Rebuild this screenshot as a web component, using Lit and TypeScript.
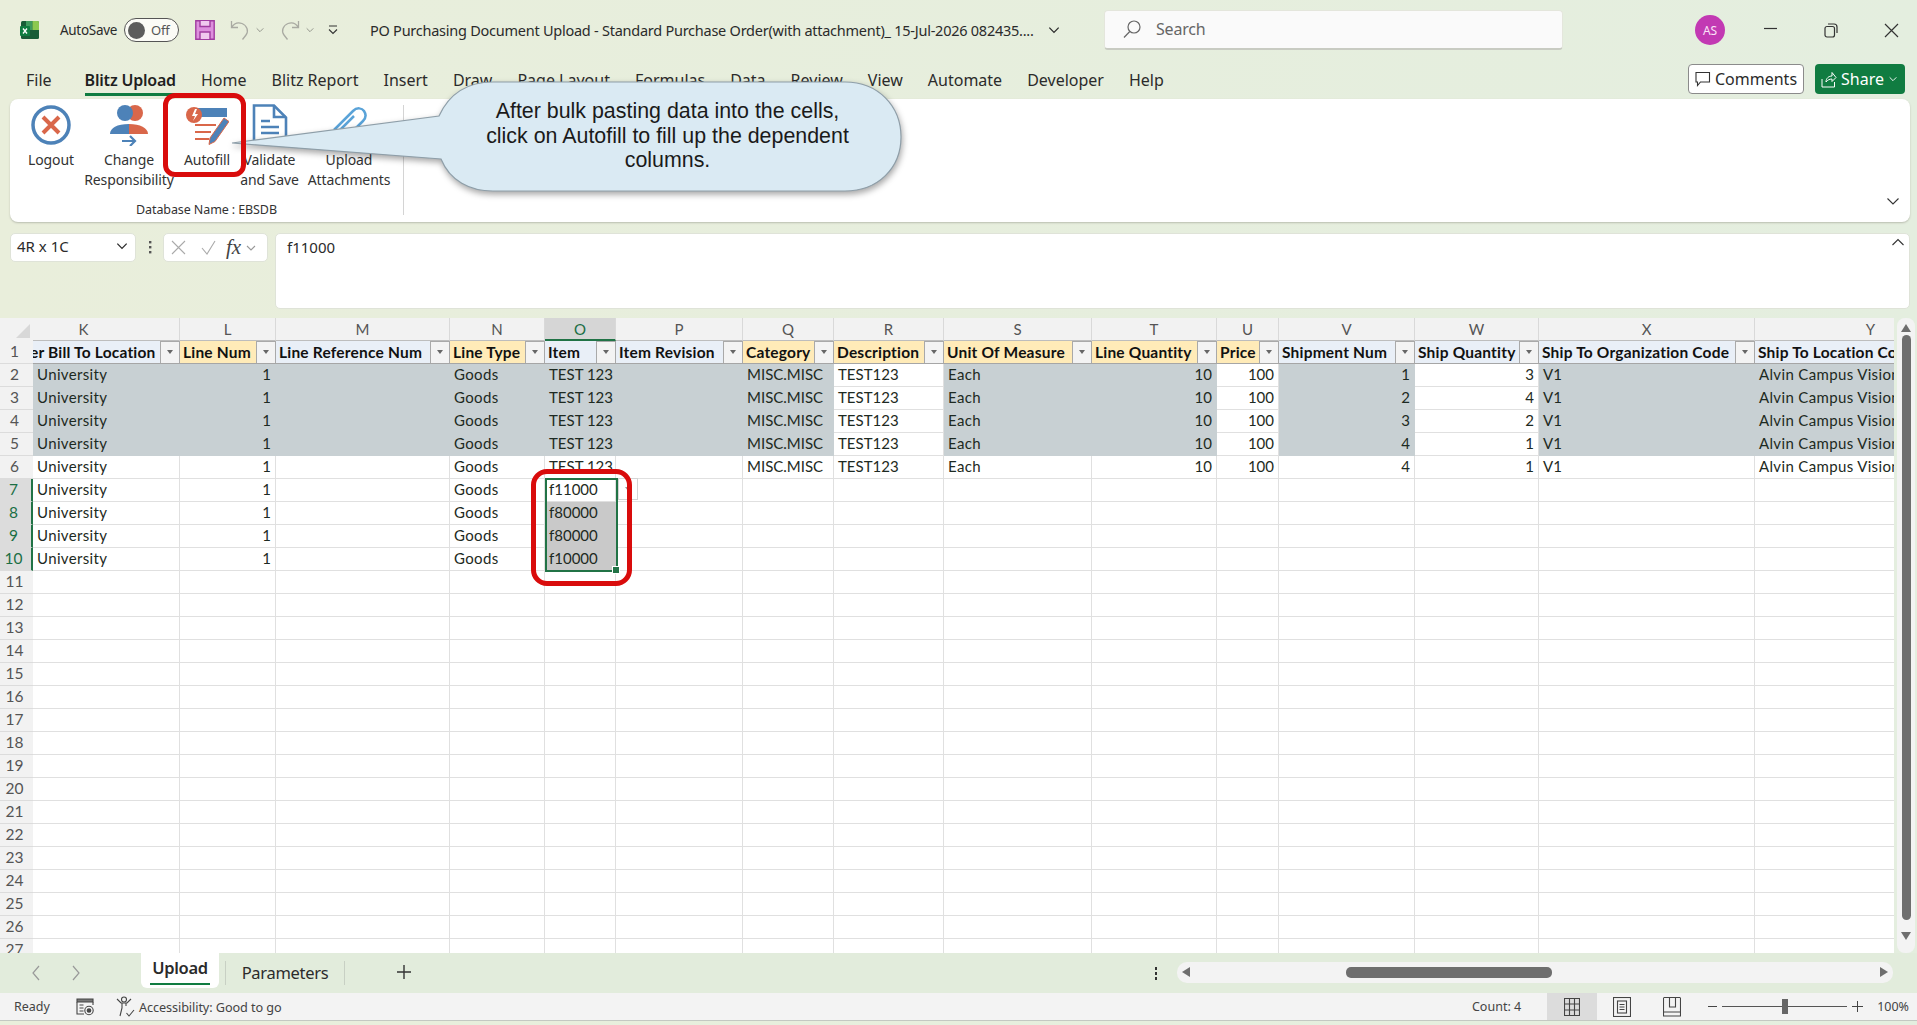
import { html, css, svg, LitElement } from 'lit';
import { customElement } from 'lit/decorators.js';

const COLS = ['K', 'L', 'M', 'N', 'O', 'P', 'Q', 'R', 'S', 'T', 'U', 'V', 'W', 'X', 'Y'];

// true = yellow "required" header, everything else is the pale blue one
const HEADERS: [string, boolean][] = [
  ['er Bill To Location', false],
  ['Line Num', true],
  ['Line Reference Num', false],
  ['Line Type', true],
  ['Item', false],
  ['Item Revision', false],
  ['Category', true],
  ['Description', true],
  ['Unit Of Measure', true],
  ['Line Quantity', true],
  ['Price', true],
  ['Shipment Num', false],
  ['Ship Quantity', false],
  ['Ship To Organization Code', false],
  ['Ship To Location Code', false],
];

const NUMERIC = new Set(['L', 'T', 'U', 'V', 'W']);
const LOWERCASE = new Set(['K', 'N', 'S', 'Y']);
const WHITE_COLS = new Set(['R', 'U', 'W']);
const SHIP_NUM = [1, 2, 3, 4, 4];
const SHIP_QTY = [3, 4, 2, 1, 1];
const ITEM_CODES = ['f11000', 'f80000', 'f80000', 'f10000'];

function cellValue(col: string, row: number): string {
  const i = row - 2;
  if (row > 10) return '';
  if (col === 'K') return 'University';
  if (col === 'L') return '1';
  if (col === 'N') return 'Goods';
  if (col === 'O') return row <= 6 ? 'TEST 123' : ITEM_CODES[row - 7];
  if (row > 6) return '';
  switch (col) {
    case 'Q': return 'MISC.MISC';
    case 'R': return 'TEST123';
    case 'S': return 'Each';
    case 'T': return '10';
    case 'U': return '100';
    case 'V': return String(SHIP_NUM[i]);
    case 'W': return String(SHIP_QTY[i]);
    case 'X': return 'V1';
    case 'Y': return 'Alvin Campus Vision';
  }
  return '';
}

const chevron = (w = 12) => html`<svg width=${w} height=${w} viewBox="0 0 12 12"><path d="M2 4l4 4 4-4" fill="none" stroke="currentColor" stroke-width="1.1"/></svg>`;

@customElement('app-root')
export class AppRoot extends LitElement {
  static styles = css`
    :host {
      display: block;
      position: relative;
      width: 1917px;
      height: 1025px;
      overflow: hidden;
      background: linear-gradient(90deg, #e9eedb, #e4eedf);
      font-family: 'Noto Sans', 'Open Sans', sans-serif;
      color: #2b2b2b;
    }
    svg { display: block; flex: none; }

    /* title bar */
    .title {
      height: 60px;
      display: flex;
      align-items: center;
      font-size: 14px;
      position: relative;
      letter-spacing: -0.2px;
    }
    .logo { margin-left: 20px; }
    .autosave { margin-left: 20px; width: 59px; font-size: 13.5px; letter-spacing: -0.3px; }
    .toggle {
      margin-left: 5px;
      width: 55px;
      height: 24px;
      box-sizing: border-box;
      border: 1px solid #555;
      border-radius: 12px;
      background: #fbfbf6;
      display: flex;
      align-items: center;
      padding-left: 3px;
      gap: 6px;
      font-size: 13px;
      color: #555;
    }
    .knob { width: 17px; height: 17px; border-radius: 50%; background: #5c5c5c; }
    .save { margin-left: 16px; }
    .undo { margin-left: 15px; color: #a9aaa2; }
    .undo-c { margin-left: 5px; color: #8d8f87; }
    .custom { margin-left: 12px; margin-right: 31px; }
    .doc { width: 666px; white-space: nowrap; font-size: 14.5px; letter-spacing: -0.25px; }
    .doc-c { margin-left: 11px; }
    .search {
      position: absolute;
      left: 1104px;
      top: 10px;
      width: 459px;
      height: 40px;
      box-sizing: border-box;
      background: #fafafa;
      border-radius: 4px;
      border: 1px solid #e4e6dc;
      border-bottom: 2px solid #c8cbc2;
      display: flex;
      align-items: center;
      padding: 0 0 2px 17px;
      gap: 14px;
      color: #666;
      font-size: 16px;
    }
    .avatar {
      position: absolute;
      left: 1695px;
      top: 15px;
      width: 30px;
      height: 30px;
      border-radius: 50%;
      background: #c239b3;
      color: #fbe3f8;
      font-size: 12px;
      display: flex;
      align-items: center;
      justify-content: center;
    }
    .win { position: absolute; top: 22px; }

    /* ribbon tabs */
    .tabs {
      height: 39px;
      display: flex;
      align-items: flex-start;
      gap: 25px;
      padding-left: 26px;
      font-size: 16px;
      position: relative;
    }
    .tabs span { padding-top: 8px; line-height: 24px; }
    .tabs .on {
      font-weight: 600;
      border-bottom: 3px solid #107c41;
      color: #1f1f1f;
      padding-top: 8px;
      margin: 0 0 0 8px;
      box-sizing: content-box;
      height: 25px;
      letter-spacing: -0.2px;
    }
    .comments {
      position: absolute;
      left: 1688px;
      top: 4px;
      width: 116px;
      height: 30px;
      box-sizing: border-box;
      border: 1px solid #8b8b8b;
      border-radius: 4px;
      background: #fff;
      display: flex;
      align-items: center;
      gap: 4px;
      padding-left: 6px;
      font-size: 16px;
    }
    .share {
      position: absolute;
      left: 1815px;
      top: 4px;
      width: 90px;
      height: 30px;
      border-radius: 4px;
      background: #107c41;
      color: #fff;
      display: flex;
      align-items: center;
      gap: 4px;
      padding-left: 6px;
      box-sizing: border-box;
      font-size: 16px;
    }

    /* ribbon */
    .ribbon {
      margin: 0 7px 0 10px;
      height: 123px;
      background: #fff;
      border-radius: 8px;
      box-shadow: 0 1px 2px #b9bdb0;
      position: relative;
      display: flex;
      font-size: 14px;
      color: #333;
    }
    .group {
      width: 393px;
      height: 110px;
      margin-top: 6px;
      border-right: 1px solid #d4d4d4;
      position: relative;
      display: flex;
      flex-direction: column;
    }
    .buttons { display: flex; height: 87px; padding-left: 9px; }
    .rb {
      display: flex;
      flex-direction: column;
      align-items: center;
      text-align: center;
      line-height: 20px;
      white-space: nowrap;
      letter-spacing: -0.1px;
    }
    .rb svg { margin: -1px 0 4px; }
    .group-name { text-align: center; font-size: 12.5px; line-height: 20px; margin-top: 10px; letter-spacing: -0.1px; }
    .collapse { position: absolute; right: 10px; bottom: 14px; color: #333; }

    /* formula bar */
    .fbar {
      height: 96px;
      box-sizing: border-box;
      padding: 11px 7px 0 10px;
      display: flex;
      align-items: flex-start;
    }
    .name {
      width: 126px;
      height: 29px;
      box-sizing: border-box;
      background: #fff;
      border: 1px solid #dfe3d8;
      border-radius: 5px;
      display: flex;
      align-items: center;
      justify-content: space-between;
      padding: 0 6px 3px;
      font-size: 15px;
    }
    .vdots { width: 27px; display: flex; justify-content: center; padding-top: 8px; }
    .fx {
      width: 105px;
      height: 29px;
      box-sizing: border-box;
      background: #fff;
      border: 1px solid #dfe3d8;
      border-radius: 5px;
      display: flex;
      align-items: center;
      padding-left: 6px;
      color: #999;
    }
    .fx .ok { margin-left: 13px; }
    .fx i {
      font: italic 21px 'Liberation Serif', serif;
      color: #444;
      margin-left: 9px;
      width: 19px;
    }
    .input {
      margin-left: 7px;
      flex: 1;
      height: 76px;
      box-sizing: border-box;
      background: #fff;
      border: 1px solid #dfe3d8;
      border-radius: 5px;
      padding: 2px 11px;
      font-size: 15px;
      line-height: 22px;
      position: relative;
    }
    .input svg { position: absolute; right: 4px; top: 2px; color: #333; }

    /* sheet */
    .book { height: 635px; display: flex; }
    .sheet {
      width: 1894px;
      height: 635px;
      overflow: hidden;
      background: #fff;
      display: grid;
      grid-template-columns: 33px 147px 96px 174px 95px 71px 127px 91px 110px 148px 125px 62px 136px 124px 216px 232px;
      grid-auto-rows: 23px;
      font-family: Lato, 'Open Sans', sans-serif;
      font-size: 15px;
      color: #1d2a22;
    }
    .corner { background: #f2f2f2; position: relative; }
    .corner::after {
      content: '';
      position: absolute;
      right: 3px;
      bottom: 3px;
      border-left: 14px solid transparent;
      border-bottom: 14px solid #d8d8d8;
    }
    .ch {
      background: #f2f2f2;
      border-right: 1px solid #d9d9d9;
      border-bottom: 1px solid #bdbdbd;
      text-align: center;
      line-height: 22px;
      color: #555;
      font-size: 15px;
      box-sizing: border-box;
    }
    .ch.k { padding-right: 45px; }
    .ch.sel { background: #d6d6d6; color: #1b6f45; border-bottom: 2px solid #217346; }
    .rh {
      background: #f2f2f2;
      border-bottom: 1px solid #dcdcdc;
      text-align: center;
      line-height: 21px;
      font-size: 15.5px;
      color: #555;
      box-sizing: border-box;
      padding-right: 4px;
    }
    .rh.sel { background: #dcdcdc; color: #1b6f45; border-right: 2px solid #217346; }
    .hd {
      box-sizing: border-box;
      display: flex;
      align-items: center;
      justify-content: space-between;
      background: #e9eff7;
      border-bottom: 1px solid #a6a6a6;
      font-size: 15.5px;
      letter-spacing: 0.2px;
      font-weight: 700;
      color: #111;
      padding-left: 3px;
      overflow: hidden;
      white-space: nowrap;
    }
    .hd.req { background: #ffebb8; }
    .hd.first { padding-left: 0; }
    .hd.first span { margin-left: -3px; }
    .hd span { overflow: hidden; }
    .flt {
      width: 20px;
      height: 23px;
      flex: none;
      box-sizing: border-box;
      background: #f3f3f3;
      border: 1px solid #a9a9a9;
      display: flex;
      align-items: center;
      justify-content: center;
    }
    .flt::after {
      content: '';
      border-left: 3.5px solid transparent;
      border-right: 3.5px solid transparent;
      border-top: 4px solid #666;
    }
    .c {
      box-sizing: border-box;
      border-right: 1px solid #e0e0e0;
      border-bottom: 1px solid #e0e0e0;
      padding: 0 4px;
      line-height: 21px;
      white-space: nowrap;
      overflow: hidden;
    }
    .c.num { text-align: right; }
    .c.wide { letter-spacing: 0.35px; }
    .c.hl { background: #c8d0d3; border-color: #c8d0d3; }
    .c.range { background: #c9c9c9; border-color: #c9c9c9; }

    .vscroll {
      flex: 1;
      margin: 0 2px 0 3px;
      background: #f3f3f3;
      border-radius: 8px;
      position: relative;
      display: flex;
      flex-direction: column;
      align-items: center;
      padding-top: 6px;
      box-sizing: border-box;
    }
    .vthumb { width: 9px; height: 585px; margin-top: 3px; background: #6e6e6e; border-radius: 5px; }
    .vscroll b { display: block; border-left: 5px solid transparent; border-right: 5px solid transparent; }
    .vscroll .up { border-bottom: 8px solid #6e6e6e; }
    .vscroll .dn { border-top: 8px solid #6e6e6e; margin-top: 12px; }

    /* sheet tabs */
    .sheets {
      height: 40px;
      background: #e2ecdc;
      display: flex;
      align-items: flex-start;
      position: relative;
      font-size: 16.5px;
    }
    .nav { width: 40px; display: flex; justify-content: center; padding-top: 12px; color: #999; }
    .nav:first-child { margin-left: 16px; }
    .tab-on {
      margin-left: 45px;
      width: 78px;
      height: 35px;
      background: #fff;
      border-radius: 0 0 6px 6px;
      box-sizing: border-box;
      text-align: center;
      font-weight: 600;
      line-height: 30px;
      position: relative;
      letter-spacing: -0.3px;
    }
    .tab-on::after {
      content: '';
      position: absolute;
      left: 9px;
      right: 9px;
      bottom: 3px;
      height: 2px;
      background: #107c41;
    }
    .tab-off {
      margin: 8px 0 0 6px;
      height: 24px;
      width: 120px;
      box-sizing: border-box;
      border-left: 1px solid #c8d0c4;
      border-right: 1px solid #c8d0c4;
      text-align: center;
      line-height: 24px;
      letter-spacing: -0.3px;
    }
    .plus { margin: 11px 0 0 51px; }
    .dots { position: absolute; left: 1154px; top: 14px; }
    .hscroll {
      position: absolute;
      left: 1177px;
      top: 9px;
      width: 716px;
      height: 21px;
      background: #f3f3f3;
      border-radius: 10px;
    }
    .hthumb { position: absolute; left: 169px; top: 5px; width: 206px; height: 11px; background: #6e6e6e; border-radius: 5px; }
    .hscroll b { position: absolute; top: 5px; border-top: 5px solid transparent; border-bottom: 5px solid transparent; }
    .hscroll .lf { left: 5px; border-right: 8px solid #6e6e6e; }
    .hscroll .rt { right: 5px; border-left: 8px solid #6e6e6e; }

    /* status bar */
    .status {
      height: 27px;
      background: #f3f3f3;
      border-bottom: 1px solid #c4c8c2;
      box-sizing: content-box;
      display: flex;
      align-items: center;
      font-size: 12.5px;
      color: #444;
      position: relative;
    }
    .ready { margin-left: 14px; width: 62px; }
    .acc { margin-left: 22px; display: flex; align-items: center; gap: 4px; font-size: 12.7px; letter-spacing: -0.1px; }
    .right { position: absolute; right: 8px; top: 0; height: 27px; display: flex; align-items: center; }
    .count { margin-right: 26px; }
    .view { width: 50px; height: 27px; display: flex; align-items: center; justify-content: center; }
    .view.on { background: #dcdcdc; }
    .zoom { display: flex; align-items: center; margin-left: 11px; }
    .track { width: 125px; height: 1px; background: #555; margin: 0 5px; position: relative; }
    .track::after { content: ''; position: absolute; left: 60px; top: -7px; width: 6px; height: 15px; background: #666; }
    .pct { margin-left: 14px; }

    /* overlays */
    .callout { position: absolute; left: 225px; top: 75px; }
    .callout-text {
      position: absolute;
      left: 438px;
      top: 99px;
      width: 459px;
      text-align: center;
      font: 21.4px/24.7px 'Liberation Sans', Arial, sans-serif;
      color: #1a1a1a;
    }
    .mark { position: absolute; box-sizing: border-box; border: 5px solid #d90c0c; }
    .mark-btn { left: 163px; top: 93px; width: 83px; height: 84px; border-radius: 12px; }
    .mark-cells { left: 531px; top: 469px; width: 101px; height: 117px; border-radius: 16px; }
    .selection { position: absolute; left: 545px; top: 478px; width: 73px; height: 94px; box-sizing: border-box; border: 2px solid #217346; }
    .handle { position: absolute; right: -4px; bottom: -4px; width: 6px; height: 6px; background: #217346; border: 1px solid #fff; }
    .dd { position: absolute; left: 618px; top: 478px; width: 20px; height: 22px; box-sizing: border-box; border: 1px solid #d4d4d4; background: #fff; display: flex; align-items: center; justify-content: center; }
    .dd::after { content: ''; border-left: 3.5px solid transparent; border-right: 3.5px solid transparent; border-top: 4px solid #999; }
  `;

  private renderSheet() {
    const rows = [];
    for (let r = 2; r <= 27; r++) {
      const inRange = r >= 7 && r <= 10;
      rows.push(html`<div class="rh ${inRange ? 'sel' : ''}">${r}</div>`);
      for (const col of COLS) {
        const gray = r <= 5 && !WHITE_COLS.has(col);
        const range = col === 'O' && r >= 8 && r <= 10;
        const cls = `c ${NUMERIC.has(col) ? 'num' : ''} ${LOWERCASE.has(col) ? 'wide' : ''} ${gray ? 'hl' : ''} ${range ? 'range' : ''}`;
        rows.push(html`<div class=${cls}>${cellValue(col, r)}</div>`);
      }
    }
    return html`
      <div class="sheet">
        <div class="corner"></div>
        ${COLS.map((c) => html`<div class="ch ${c === 'O' ? 'sel' : ''} ${c === 'K' ? 'k' : ''}">${c}</div>`)}
        <div class="rh">1</div>
        ${HEADERS.map(([t, req], i) => html`
          <div class="hd ${req ? 'req' : ''} ${i === 0 ? 'first' : ''}">
            <span>${t}</span>${i === 14 ? '' : html`<div class="flt"></div>`}
          </div>`)}
        ${rows}
      </div>`;
  }

  render() {
    return html`
      <div class="title">
        <svg class="logo" width="20" height="20" viewBox="0 0 20 20">
          <rect x="1" y="1" width="18" height="18" rx="1.5" fill="#185c37"/>
          <path d="M6 1h6.500v9H6z" fill="#3f9a5e"/>
          <path d="M12.500 1H17.500a1.500 1.500 0 0 1 1.500 1.500V10h-6.500z" fill="#8cc850"/>
          <rect x="0" y="6" width="10" height="10" rx="1" fill="#107c41"/>
          <path d="M3 8.500l4 5M7 8.500l-4 5" stroke="#fff" stroke-width="1.300"/>
        </svg>
        <span class="autosave">AutoSave</span>
        <div class="toggle"><div class="knob"></div>Off</div>
        <svg class="save" width="20" height="20" viewBox="0 0 20 20">
          <path d="M.8.8h18.400v18.400H.8z" fill="#dd8fdd" stroke="#a03ba0" stroke-width="1.400"/>
          <path d="M5 1v5.500h10V1M5 19v-7h10v7" fill="#f0c8ee" stroke="#a03ba0" stroke-width="1.400"/>
        </svg>
        <svg class="undo" width="20" height="20" viewBox="0 0 20 20" fill="none" stroke="currentColor" stroke-width="1.300">
          <path d="M1.500 1v6.500H8M1.500 7.500C4 3.500 8 2 12 3.500c5 2 7 7.500 4 11.500l-3.500 4.500"/>
        </svg>
        <span class="undo-c">${chevron(10)}</span>
        <svg class="undo" width="20" height="20" viewBox="0 0 20 20" fill="none" stroke="currentColor" stroke-width="1.300" style="transform:scaleX(-1)">
          <path d="M1.500 1v6.500H8M1.500 7.500C4 3.500 8 2 12 3.500c5 2 7 7.500 4 11.500l-3.500 4.500"/>
        </svg>
        <span class="undo-c">${chevron(10)}</span>
        <svg class="custom" width="12" height="12" viewBox="0 0 12 12" fill="none" stroke="#333" stroke-width="1.100">
          <path d="M2 2h8M2 5.500l4 4 4-4"/>
        </svg>
        <span class="doc">PO Purchasing Document Upload - Standard Purchase Order(with attachment)_ 15-Jul-2026 082435....</span>
        <span class="doc-c">${chevron(14)}</span>
        <div class="search">
          <svg width="20" height="20" viewBox="0 0 20 20" fill="none" stroke="#666" stroke-width="1.200"><circle cx="12" cy="8" r="6"/><path d="M7.800 12.500L2 18.500"/></svg>
          Search
        </div>
        <div class="avatar">AS</div>
        <svg class="win" style="left:1764px" width="14" height="14" viewBox="0 0 14 14"><path d="M0 6.500h13" stroke="#333" stroke-width="1.200"/></svg>
        <svg class="win" style="left:1824px;top:23px" width="14" height="15" viewBox="0 0 14 15" fill="none" stroke="#333" stroke-width="1.200"><rect x="1" y="3.500" width="9.500" height="10.500" rx="2"/><path d="M4 1h6a3 3 0 0 1 3 3v6"/></svg>
        <svg class="win" style="left:1884px;top:23px" width="15" height="15" viewBox="0 0 15 15"><path d="M1 1l13 13M14 1L1 14" stroke="#333" stroke-width="1.200"/></svg>
      </div>

      <div class="tabs">
        <span>File</span>
        <span class="on">Blitz Upload</span>
        <span>Home</span>
        <span>Blitz Report</span>
        <span>Insert</span>
        <span>Draw</span>
        <span>Page Layout</span>
        <span>Formulas</span>
        <span>Data</span>
        <span>Review</span>
        <span>View</span>
        <span>Automate</span>
        <span>Developer</span>
        <span>Help</span>
        <div class="comments">
          <svg width="16" height="16" viewBox="0 0 16 16" fill="none" stroke="#333" stroke-width="1.100"><path d="M1 1.500h13.500v9.500H5.500L2.500 14.500V11H1z"/></svg>
          Comments
        </div>
        <div class="share">
          <svg width="16" height="18" viewBox="0 0 16 18" fill="none" stroke="#fff" stroke-width="1"><path d="M1 9v8h12.500v-5M5 12c0-4 3-6 6-6V2.500l4 5-4 4V9c-2.500 0-4.500 1-6 3z"/></svg>
          Share
          ${chevron(10)}
        </div>
      </div>

      <div class="ribbon">
        <div class="group">
          <div class="buttons">
            <div class="rb" style="width:64px">
              ${svg`<svg width="42" height="42" viewBox="0 0 42 42">
                <circle cx="21" cy="21" r="18" fill="none" stroke="#4d82b8" stroke-width="3.500"/>
                <path d="M13 13l16 16M29 13L13 29" stroke="#d9674a" stroke-width="4"/></svg>`}
              Logout
            </div>
            <div class="rb" style="width:90px;margin-left:1px">
              ${svg`<svg width="42" height="42" viewBox="0 0 42 42">
                <circle cx="27" cy="9" r="8" fill="#d9674a"/>
                <circle cx="17" cy="9" r="8" fill="#4d82b8"/>
                <path d="M2 30c0-6 7-10 19-10v10z" fill="#4d82b8"/>
                <path d="M21 20c11 0 19 4 19 10H21z" fill="#d9674a"/>
                <path d="M14 37h13M22 32l5 5-5 5" fill="none" stroke="#4d82b8" stroke-width="2.200"/></svg>`}
              Change<br>Responsibility
            </div>
            <div class="rb" style="width:62px;margin-left:2px">
              ${svg`<svg width="44" height="42" viewBox="0 0 44 42">
                <rect x="10" y="4" width="32" height="9" fill="#4d82b8"/>
                <circle cx="9" cy="11" r="8" fill="#d9674a"/>
                <path d="M10 5l-3 7h3l-2 5 5-7h-3l2-5z" fill="#fff"/>
                <path d="M10 21h21M10 28h16M10 35h14" stroke="#d9674a" stroke-width="2.200"/>
                <path d="M39 14l5 3.500-14 20-6 3 1-6.500z" fill="#4d82b8" stroke="#d9674a" stroke-width="1"/></svg>`}
              Autofill
            </div>
            <div class="rb" style="width:61px;margin-left:1px">
              ${svg`<svg width="36" height="42" viewBox="0 0 36 42">
                <path d="M2 1.500h20l12 12V38H2z" fill="#fff" stroke="#4d82b8" stroke-width="2.600"/>
                <path d="M22 1.500V13h12" fill="none" stroke="#4d82b8" stroke-width="2.600"/>
                <path d="M9 17h9M9 23h18M9 29h18" stroke="#4d82b8" stroke-width="2.600"/></svg>`}
              Validate<br>and Save
            </div>
            <div class="rb" style="width:92px;margin-left:3px">
              ${svg`<svg width="40" height="42" viewBox="0 0 40 42">
                <path d="M5 26L24 7c4-4 9-3 11 0s2 7-1 10L18 33c-3 3-6 3-8 1s-2-5 0-7L25 12" fill="none" stroke="#5aa3d8" stroke-width="2.500"/></svg>`}
              Upload<br>Attachments
            </div>
          </div>
          <div class="group-name">Database Name : EBSDB</div>
        </div>
        <svg class="collapse" width="14" height="14" viewBox="0 0 14 14"><path d="M1.500 4.500L7 10l5.500-5.500" fill="none" stroke="#333" stroke-width="1.100"/></svg>
      </div>

      <div class="fbar">
        <div class="name">4R x 1C ${chevron(14)}</div>
        <div class="vdots">
          <svg width="4" height="14" viewBox="0 0 4 14" fill="#555"><rect x="1" y="0" width="2.400" height="2.400"/><rect x="1" y="5" width="2.400" height="2.400"/><rect x="1" y="10" width="2.400" height="2.400"/></svg>
        </div>
        <div class="fx">
          <svg width="17" height="17" viewBox="0 0 17 17"><path d="M2 2l13 13M15 2L2 15" stroke="#aaa" stroke-width="1.100"/></svg>
          <svg class="ok" width="17" height="17" viewBox="0 0 17 17"><path d="M2 9l5 6L15 2" fill="none" stroke="#aaa" stroke-width="1.100"/></svg>
          <i>fx</i>
          ${chevron(12)}
        </div>
        <div class="input">
          f11000
          <svg width="14" height="14" viewBox="0 0 14 14"><path d="M1.500 9L7 3.500 12.500 9" fill="none" stroke="currentColor" stroke-width="1.100"/></svg>
        </div>
      </div>

      <div class="book">
        ${this.renderSheet()}
        <div class="vscroll">
          <b class="up"></b>
          <div class="vthumb"></div>
          <b class="dn"></b>
        </div>
      </div>

      <div class="sheets">
        <div class="nav"><svg width="10" height="16" viewBox="0 0 10 16"><path d="M8 1L2 8l6 7" fill="none" stroke="currentColor" stroke-width="1.200"/></svg></div>
        <div class="nav"><svg width="10" height="16" viewBox="0 0 10 16"><path d="M2 1l6 7-6 7" fill="none" stroke="currentColor" stroke-width="1.200"/></svg></div>
        <div class="tab-on">Upload</div>
        <div class="tab-off">Parameters</div>
        <svg class="plus" width="16" height="16" viewBox="0 0 16 16"><path d="M8 1v14M1 8h14" stroke="#333" stroke-width="1.400"/></svg>
        <svg class="dots" width="4" height="14" viewBox="0 0 4 14" fill="#333"><rect x="1" y="0" width="2" height="3"/><rect x="1" y="5" width="2" height="3"/><rect x="1" y="10" width="2" height="3"/></svg>
        <div class="hscroll">
          <b class="lf"></b>
          <div class="hthumb"></div>
          <b class="rt"></b>
        </div>
      </div>

      <div class="status">
        <span class="ready">Ready</span>
        <svg width="18" height="18" viewBox="0 0 18 18" fill="none" stroke="#444" stroke-width="1.100">
          <path d="M1 1h16v3H1z" fill="#777"/><path d="M1 4v12h7M17 4v3"/><circle cx="13" cy="12.500" r="4.200"/><circle cx="13" cy="12.500" r="1.800" fill="#444"/><path d="M3.500 7h4M3.500 10h4M3.500 13h4"/>
        </svg>
        <div class="acc">
          <svg width="19" height="22" viewBox="0 0 19 22" fill="none" stroke="#444" stroke-width="1.100">
            <circle cx="8" cy="3.500" r="2.500"/><path d="M1 3l4 4h6l4-4M6 7v5l-2 8M10 7v3M10.500 17l2.500 3 5-6"/>
          </svg>
          Accessibility: Good to go
        </div>
        <div class="right">
          <span class="count">Count: 4</span>
          <div class="view on"><svg width="16" height="18" viewBox="0 0 16 18" fill="none" stroke="#444" stroke-width="1.100"><path d="M.5.500h15v17H.5zM5.500.500v17M10.500.500v17M.5 6h15M.5 12h15"/></svg></div>
          <div class="view"><svg width="18" height="20" viewBox="0 0 18 20" fill="none" stroke="#444" stroke-width="1.100"><rect x=".5" y=".5" width="17" height="19"/><rect x="4.500" y="4" width="9" height="12"/><path d="M6.500 7.500h5M6.500 10h5M6.500 12.500h5"/></svg></div>
          <div class="view"><svg width="18" height="20" viewBox="0 0 18 20" fill="none" stroke="#444" stroke-width="1.100"><path d="M.5 1v18h17V1M.5 15h17M6.500 1v9h6V1M.5.500h17"/></svg></div>
          <div class="zoom">
            <svg width="9" height="9" viewBox="0 0 9 9"><path d="M0 4.500h9" stroke="#444"/></svg>
            <div class="track"></div>
            <svg width="11" height="11" viewBox="0 0 11 11"><path d="M0 5.500h11M5.500 0v11" stroke="#444"/></svg>
            <span class="pct">100%</span>
          </div>
        </div>
      </div>

      <div class="selection"><div class="handle"></div></div>
      <div class="dd"></div>
      <div class="mark mark-cells"></div>

      ${svg`<svg class="callout" width="690" height="130" viewBox="225 75 690 130" style="filter:drop-shadow(1px 3px 3px rgba(0,0,0,.35))">
        <path d="M232 143L439 116C450 92 470 82 493 82H845C878 82 901 106 901 137C901 168 878 191 845 191H493C470 191 450 181 441 159Z"
          fill="#daeaf3" stroke="#8e9ea8" stroke-width="1.200"/></svg>`}
      <div class="callout-text">After bulk pasting data into the cells,<br>click on Autofill to fill up the dependent<br>columns.</div>
      <div class="mark mark-btn"></div>
    `;
  }
}

declare global {
  interface HTMLElementTagNameMap {
    'app-root': AppRoot;
  }
}
